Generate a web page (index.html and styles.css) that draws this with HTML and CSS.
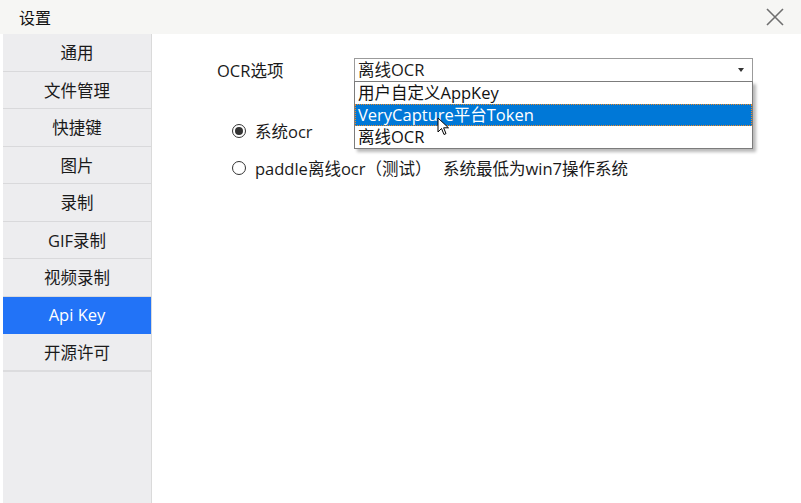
FILE: index.html
```html
<!DOCTYPE html>
<html lang="zh-CN">
<head>
<meta charset="utf-8">
<title>设置</title>
<link rel="stylesheet" href="styles.css">
</head>
<body>
<div class="window">
  <div class="titlebar">
    <span class="title">设置</span>
    <svg class="close" width="18" height="18" viewBox="0 0 18 18"><path d="M1 1L17 17M17 1L1 17" stroke="#6f6f6f" stroke-width="1.6" fill="none"/></svg>
  </div>
  <div class="main">
    <nav class="sidebar">
      <div class="nav-item">通用</div>
      <div class="nav-item">文件管理</div>
      <div class="nav-item">快捷键</div>
      <div class="nav-item">图片</div>
      <div class="nav-item">录制</div>
      <div class="nav-item">GIF录制</div>
      <div class="nav-item">视频录制</div>
      <div class="nav-item active">Api Key</div>
      <div class="nav-item last">开源许可</div>
    </nav>
    <section class="content">
      <div class="form-row">
        <span class="label">OCR选项</span>
        <div class="select-wrap">
          <div class="select">
            <span>离线OCR</span>
            <span class="arrow"></span>
          </div>
          <div class="dropdown">
            <div class="option">用户自定义AppKey</div>
            <div class="option selected">VeryCapture平台Token</div>
            <div class="option">离线OCR</div>
            <svg class="cursor" width="14" height="20" viewBox="0 0 14 20"><path d="M1 1L1 15L4.5 11.5L7 17.5L9 16.6L6.6 10.8L11.5 10.8Z" fill="#fff" stroke="#000" stroke-width="1" stroke-linejoin="round"/></svg>
          </div>
        </div>
      </div>
      <div class="radio-row first">
        <span class="radio checked"></span>
        <span class="radio-label">系统ocr</span>
      </div>
      <div class="radio-row">
        <span class="radio"></span>
        <span class="radio-label">paddle离线ocr（测试）</span>
        <span class="note">系统最低为win7操作系统</span>
      </div>
    </section>
  </div>
</div>
</body>
</html>
```

FILE: styles.css
```css
* { box-sizing: border-box; }
html, body {
  margin: 0;
  padding: 0;
  width: 801px;
  height: 503px;
  overflow: hidden;
  background: #ffffff;
  font-family: "Open Sans", "Noto Sans CJK SC", sans-serif;
  font-size: 16.5px;
  color: #1a1a1a;
}
.window {
  display: flex;
  flex-direction: column;
  height: 503px;
}
.titlebar {
  height: 34px;
  background: #f6f6f4;
  display: flex;
  align-items: center;
  justify-content: space-between;
  padding: 0 17px 0 19px;
  flex: none;
}
.title {
  font-family: "Noto Sans CJK SC", sans-serif;
  font-size: 16px;
  color: #111;
}
.close { display: block; }
.main {
  flex: 1;
  display: flex;
  min-height: 0;
}
.sidebar {
  width: 149px;
  margin-left: 3px;
  background: #ededef;
  border-right: 1px solid #dadada;
  display: flex;
  flex-direction: column;
  flex: none;
}
.nav-item {
  height: 37.5px;
  display: flex;
  align-items: center;
  justify-content: center;
  border-bottom: 1px solid #d9d9db;
  color: #1a1a1a;
}
.nav-item.active {
  background: #2273f7;
  color: #ffffff;
  border-bottom-color: #2273f7;
}
.nav-item.last {
  border-bottom: 2px solid #dcdcde;
  height: 38px;
}
.content {
  flex: 1;
  padding: 24px 0 0 65px;
}
.form-row {
  display: flex;
  align-items: center;
  height: 24px;
}
.label {
  width: 137px;
}
.select-wrap {
  position: relative;
  width: 399px;
}
.select {
  height: 24px;
  border: 1px solid #9b9b9b;
  background: #fff;
  display: flex;
  align-items: center;
  justify-content: space-between;
  padding: 0 8px 0 3px;
  line-height: 22px;
}
.arrow {
  width: 0;
  height: 0;
  border-left: 3.5px solid transparent;
  border-right: 3.5px solid transparent;
  border-top: 4px solid #333;
}
.dropdown {
  position: absolute;
  top: 23px;
  left: 0;
  width: 399px;
  background: #fff;
  border: 1px solid #7c7c7c;
  box-shadow: 3px 3px 3px rgba(0, 0, 0, 0.28);
  z-index: 5;
}
.option {
  height: 22px;
  line-height: 22px;
  padding-left: 3px;
  color: #111;
}
.option.selected {
  background: #0078d7;
  color: #fff;
  outline: 1px dotted #f08a24;
  outline-offset: -1px;
}
.cursor {
  position: absolute;
  left: 82px;
  top: 35px;
}
.radio-row {
  display: flex;
  align-items: center;
  height: 22px;
  margin-top: 15px;
  margin-left: 15px;
}
.radio-row.first {
  margin-top: 38px;
}
.radio {
  width: 14px;
  height: 14px;
  border: 1px solid #333;
  border-radius: 50%;
  background: #fff;
  margin-right: 9px;
  display: flex;
  align-items: center;
  justify-content: center;
}
.radio.checked::after {
  content: "";
  width: 8px;
  height: 8px;
  border-radius: 50%;
  background: #333;
}
.radio-label {
  width: 188px;
}
```
